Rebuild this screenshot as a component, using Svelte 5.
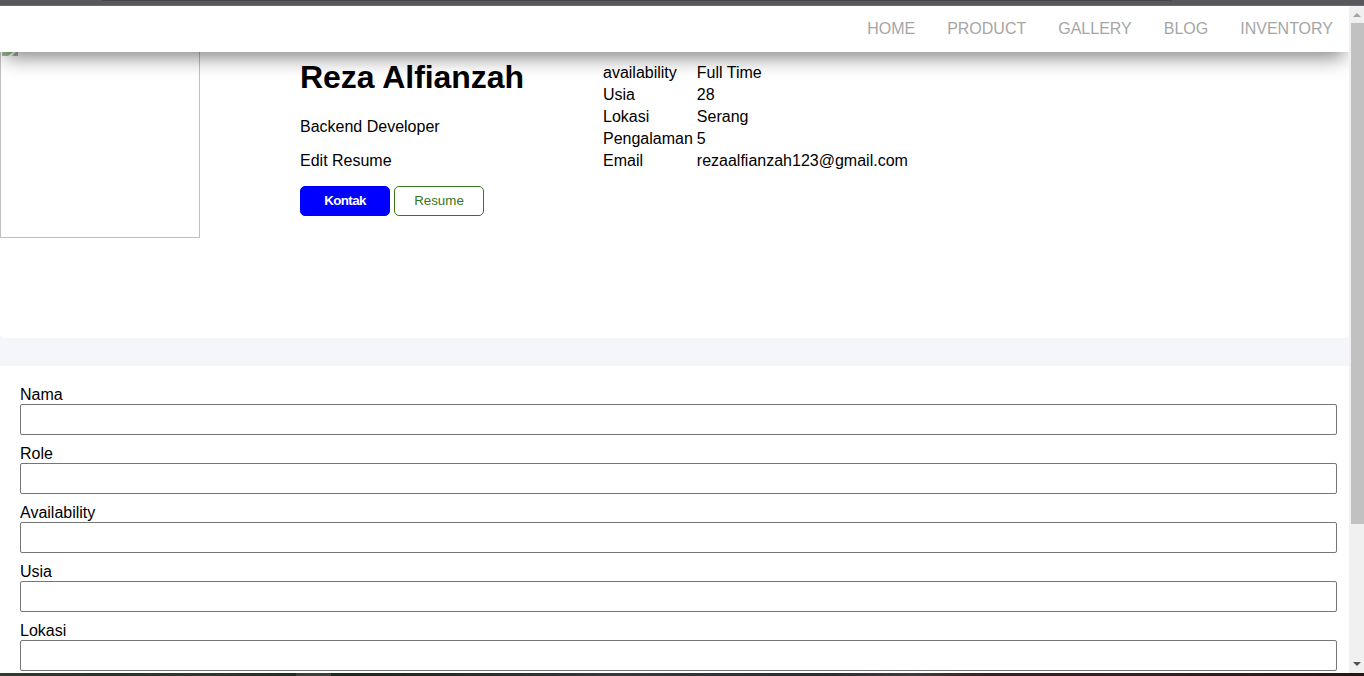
<script>
  const links = ['HOME', 'PRODUCT', 'GALLERY', 'BLOG', 'INVENTORY'];
  const details = [
    ['availability', 'Full Time'],
    ['Usia', '28'],
    ['Lokasi', 'Serang'],
    ['Pengalaman', '5'],
    ['Email', 'rezaalfianzah123@gmail.com']
  ];
  const fields = ['Nama', 'Role', 'Availability', 'Usia', 'Lokasi'];
</script>

<div class="window">
  <div class="chrome"></div>
  <div class="view">
    <div class="page">
      <nav>
        {#each links as link}<a href="#top">{link}</a>{/each}
      </nav>
      <section class="profile">
        <div class="photo">
          <svg width="16" height="4" viewBox="0 0 16 4">
            <path d="M0 0h16v4H0z" fill="#a9b3a9" />
            <path d="M1 0h9L6 3H1z" fill="#8fb886" />
            <path d="M11 0h3L10 4H6z" fill="#f2fbf0" />
            <path d="M14 0h1v3h-4z" fill="#9ab596" />
          </svg>
        </div>
        <div class="intro">
          <h1>Reza Alfianzah</h1>
          <p>Backend Developer</p>
          <p>Edit Resume</p>
          <div class="actions">
            <button class="contact">Kontak</button>
            <button class="resume">Resume</button>
          </div>
        </div>
        <table>
          <tbody>
            {#each details as [name, value]}
              <tr><td>{name}</td><td>{value}</td></tr>
            {/each}
          </tbody>
        </table>
      </section>
      <div class="band"></div>
      <form>
        {#each fields as field}
          <label><span>{field}</span><input type="text" /></label>
        {/each}
      </form>
    </div>
    <div class="scrollbar">
      <svg class="up" width="15" height="17" viewBox="0 0 15 17"><path d="M4 11h8L8 7z" fill="#a3a3a3" /></svg>
      <div class="thumb"></div>
      <svg class="down" width="15" height="17" viewBox="0 0 15 17"><path d="M4 6h8L8 10z" fill="#505050" /></svg>
    </div>
  </div>
  <div class="taskbar"></div>
</div>

<style>
  :global(body) { margin: 0; overflow: hidden; }
  .window {
    display: flex;
    flex-direction: column;
    height: 676px;
    font: 16px/18px "Liberation Sans", Arial, sans-serif;
    color: #000;
    background: #fff;
  }
  .chrome {
    flex: none;
    box-sizing: border-box;
    height: 6px;
    background: linear-gradient(90deg, #58575c 102px, #454449 102px, #454449 1172px, #58575c 1172px) top / 100% 1px no-repeat #58575c;
    border-bottom: 1px solid #6d6b70;
  }
  .view { flex: none; display: flex; height: 667px; overflow: hidden; }
  .page {
    width: 1349px;
    overflow: hidden;
    background: linear-gradient(#f5f6fc, #f5f6fc) 0 300px / 100% 60px no-repeat #fff;
  }
  nav {
    position: relative;
    z-index: 1;
    display: flex;
    justify-content: flex-end;
    gap: 32px;
    box-sizing: border-box;
    height: 46px;
    padding: 14px 16px 0;
    background: #fff;
    box-shadow: 0 10px 20px -5px rgba(0, 0, 0, 0.5);
  }
  nav a { color: #a6a6a6; text-decoration: none; }
  .profile {
    display: flex;
    box-sizing: border-box;
    height: 286px;
    background: #fff;
    border-radius: 0 0 5px 5px;
  }
  .photo {
    box-sizing: border-box;
    width: 200px;
    height: 186px;
    border: 1px solid #c0c0c0;
    border-top: 0;
  }
  .photo svg { display: block; margin-left: 1px; }
  .intro { width: 300px; padding: 7px 0 0 100px; }
  h1 { margin: 0 0 22px; font-size: 32px; line-height: 37px; letter-spacing: -0.040px; }
  p { margin: 0 0 16px; }
  .actions { display: flex; gap: 4px; }
  button {
    box-sizing: border-box;
    width: 90px;
    height: 30px;
    padding: 0 0 2px;
    border: 1px solid #00f;
    border-radius: 5px;
    font: 13.333px "Liberation Sans", Arial, sans-serif;
  }
  .contact { background: #00f; color: #fff; font-weight: bold; letter-spacing: -0.600px; }
  .resume { background: #fff; color: #38761d; border-color: #38761d; }
  table { align-self: flex-start; margin-top: 9px; border-spacing: 2px; }
  td { padding: 1px; white-space: nowrap; }
  .band { height: 28px; }
  form { display: flex; flex-direction: column; gap: 10px; padding: 20px 12px 0 20px; background: #fff; }
  label span { display: block; }
  input {
    display: block;
    box-sizing: border-box;
    width: 100%;
    height: 31px;
    margin: 0;
    border: 1px solid #767676;
    border-radius: 2px;
    outline: 0;
    background: #fff;
  }
  .scrollbar {
    display: flex;
    flex-direction: column;
    width: 15px;
    background: #f0f0f0;
  }
  .scrollbar svg { flex: none; display: block; }
  .thumb { height: 501px; margin-left: 2px; background: #c1c1c1; }
  .down { margin-top: auto; }
  .taskbar {
    height: 3px;
    background: linear-gradient(90deg, #35392f, #253528 8%, #303a2b 15%, #1f2e23 21.700%, #39413b 21.700%, #39413b 24.300%, #1a2c1e 24.300%, #252823 30%, #38383b 45%, #2c2e30 60%, #433a3d 67%, #421e21 72%, #3c1c1e 86%, #2a1416);
  }
</style>
